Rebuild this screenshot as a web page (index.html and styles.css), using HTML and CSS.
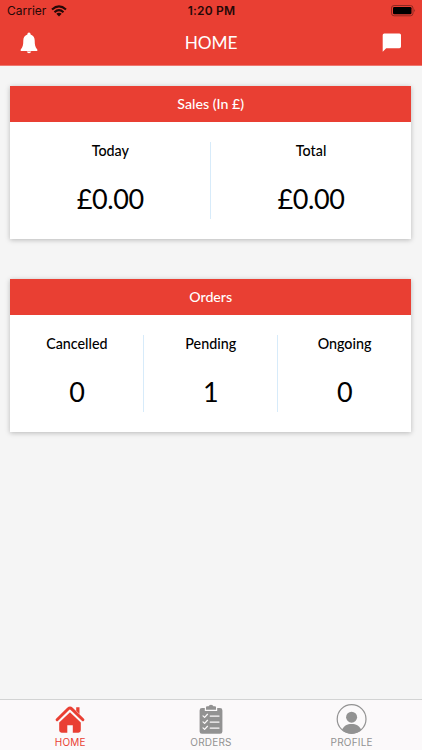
FILE: index.html
```html
<!DOCTYPE html>
<html lang="en">
<head>
<meta charset="utf-8">
<title>Home</title>
<link rel="stylesheet" href="styles.css">
</head>
<body>
<div class="app">
  <header class="header">
    <div class="status">
      <div class="carrier"><span>Carrier</span>
        <svg class="wifi" viewBox="0 0 16 12"><g fill="none" stroke="#250807" stroke-width="2.1"><path d="M1 4.5Q8-1.8 15 4.5"/><path d="M3.5 7.3Q8 3.1 12.5 7.3"/></g><path d="M5.3 8.8Q8 6.6 10.7 8.8L8 11.5Z" fill="#250807"/></svg>
      </div>
      <div class="time">1:20 PM</div>
      <svg class="battery" viewBox="0 0 25 12"><rect x=".5" y=".5" width="21.5" height="10.3" rx="2.6" fill="none" stroke="#8e2821"/><rect x="2" y="2" width="18.5" height="7.3" rx="1.3"/><path d="M23.2 4Q25 5.6 23.2 7.3Z" fill="#8e2821"/></svg>
    </div>
    <div class="nav">
      <svg class="bell" viewBox="0 0 18 22"><path fill="#fff" d="M9 .5C8 .5 7.4 1.3 7.4 2.4C4.6 3.2 3.3 5.6 3.3 8.5C3.3 13 2.8 15.2.7 17.5V19H17.3V17.5C15.2 15.2 14.7 13 14.7 8.5C14.7 5.6 13.4 3.2 10.6 2.4C10.6 1.3 10 .5 9 .5ZM6.7 19.6H11.3Q10.6 21.3 9 21.3T6.7 19.6Z"/></svg>
      <h1>HOME</h1>
      <svg class="chat" viewBox="0 0 20 20"><path fill="#fff" d="M2.3.5H17.4Q19 .5 19 2.1V13.6Q19 15.2 17.4 15.2H4.2L.7 18.7V2.1Q.7.5 2.3.5Z"/></svg>
    </div>
  </header>
  <main class="content">
    <section class="card">
      <h2>Sales (In £)</h2>
      <div class="stats">
        <div class="stat"><span class="label">Today</span><span class="value">£0.00</span></div>
        <div class="stat"><span class="label">Total</span><span class="value">£0.00</span></div>
      </div>
    </section>
    <section class="card">
      <h2>Orders</h2>
      <div class="stats">
        <div class="stat"><span class="label">Cancelled</span><span class="value">0</span></div>
        <div class="stat"><span class="label">Pending</span><span class="value">1</span></div>
        <div class="stat"><span class="label">Ongoing</span><span class="value">0</span></div>
      </div>
    </section>
  </main>
  <nav class="tabs">
    <a class="tab active">
      <svg viewBox="0 0 32 32"><path fill="none" stroke="currentColor" stroke-width="3" stroke-linecap="round" stroke-linejoin="round" d="M3.1 16.7L14.3 5.8Q16 4.2 17.7 5.8L28.9 16.7"/><path fill="currentColor" d="M22.2 4.2H25.5V11L22.2 7.8ZM16 9.2L26.8 19.5V27.3Q26.8 29.7 24.4 29.7H18.8V22.2H13.3V29.7H7.6Q5.2 29.7 5.2 27.3V19.5Z"/></svg>
      <span>HOME</span>
    </a>
    <a class="tab">
      <svg viewBox="0 0 32 32"><path fill="currentColor" d="M7 5H9.8V8H22.2V5H25Q27.4 5 27.4 7.4V28.4Q27.4 30.8 25 30.8H7Q4.6 30.8 4.6 28.4V7.4Q4.6 5 7 5ZM11 6.8V4.3Q11 3.3 12 3.3H13.6Q14 1.7 16 1.7T18.4 3.3H20Q21 3.3 21 4.3V6.8Z"/><g fill="none" stroke="#fbf9fa" stroke-width="1.25" stroke-linecap="round" stroke-linejoin="round"><path d="M8 12.9L9.6 14.4L12.5 11.3M8 18.9L9.6 20.4L12.5 17.3M8 24.9L9.6 26.4L12.5 23.3M15.2 13.1H24M15.2 19.1H24M15.2 25.1H24"/></g></svg>
      <span>ORDERS</span>
    </a>
    <a class="tab">
      <svg viewBox="0 0 32 32"><circle cx="15.6" cy="16" r="14.4" fill="none" stroke="currentColor" stroke-width="1.2"/><circle cx="15.6" cy="14.2" r="5.5" fill="currentColor"/><path fill="currentColor" d="M6 26.7C8.4 22.5 10.9 20.9 15.6 20.9S22.8 22.5 25.2 26.7Q21.1 30.7 15.6 30.7T6 26.7Z"/></svg>
      <span>PROFILE</span>
    </a>
  </nav>
</div>
</body>
</html>
```
FILE: styles.css
```css
* { box-sizing: border-box; }
body { margin: 0; font-family: Lato, sans-serif; background: #f5f5f5; }
svg { display: block; }
.app { width: 422px; height: 750px; display: flex; flex-direction: column; overflow: hidden; }
.header { height: 66px; flex: none; background: #e93f33; border-bottom: 1px solid #ee776f; }
.status { height: 21px; display: grid; grid-template-columns: 1fr auto 1fr; align-items: center; padding: 0 6px 0 7px; font-family: Inter, sans-serif; color: #250807; }
.carrier { display: flex; align-items: center; gap: 5px; font-size: 12px; }
.wifi { width: 16px; height: 12px; }
.time { font-size: 12px; font-weight: 600; letter-spacing: .2px; }
.battery { width: 25px; height: 12px; justify-self: end; }
.nav { height: 43px; display: grid; grid-template-columns: 1fr auto 1fr; align-items: center; padding: 0 20px 0 20px; }
.nav h1 { margin: 0; font-size: 17.3px; font-weight: 400; color: #fff; line-height: 22px; padding-top: 1px; letter-spacing: -.1px; }
.bell { width: 18px; height: 22px; }
.chat { width: 20px; height: 20px; justify-self: end; }
.content { flex: 1; padding: 20px 11px 0 10.4px; display: flex; flex-direction: column; gap: 40.5px; }
.card { height: 152.6px; background: #fff; box-shadow: 0 1px 5px rgba(0,0,0,.25); }
.card h2 { margin: 0; height: 35.6px; line-height: 36px; text-align: center; font-size: 14.2px; font-weight: 500; color: #fff; background: #e93f33; }
.stats { display: flex; padding: 20px 0; }
.stat { flex: 1 1 0; height: 77px; display: flex; flex-direction: column; align-items: center; border-right: 1px solid #d7ebfa; }
.stat:last-child { border-right: 0; }
.label { font-size: 14.3px; font-weight: 500; line-height: 17px; color: #000; }
.value { margin-top: 22px; font-size: 27px; line-height: 36px; letter-spacing: -.4px; color: #000; }
.tabs { height: 51px; flex: none; display: flex; background: #fbf9fa; border-top: 1px solid #d2d3d3; }
.tab { flex: 1; display: flex; flex-direction: column; align-items: center; padding-top: 3px; color: #929292; font-family: Inter, sans-serif; font-size: 10px; }
.tab svg { width: 32px; height: 32px; }
.tab span { line-height: 14px; letter-spacing: .2px; }
.active { color: #e93f33; }
```
